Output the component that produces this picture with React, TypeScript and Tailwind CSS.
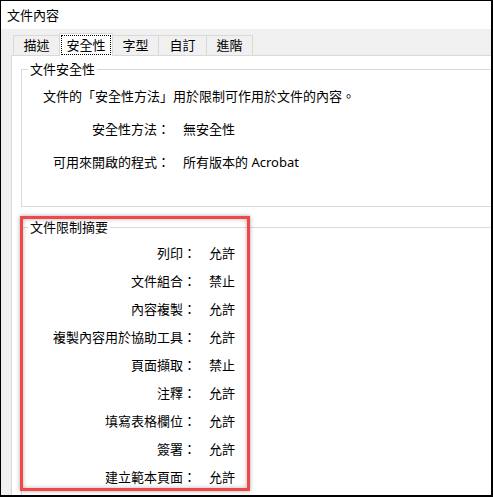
const tabs = [
  { label: "描述", w: "w-[46px]" },
  { label: "安全性", w: "w-[54px]", active: true },
  { label: "字型", w: "w-[45px]" },
  { label: "自訂", w: "w-[48px]" },
  { label: "進階", w: "w-[47px]" },
];

const security = [
  { label: "安全性方法：", value: "無安全性" },
  { label: "可用來開啟的程式：", value: "所有版本的 Acrobat" },
];

const restrictions = [
  { label: "列印：", value: "允許" },
  { label: "文件組合：", value: "禁止" },
  { label: "內容複製：", value: "允許" },
  { label: "複製內容用於協助工具：", value: "允許" },
  { label: "頁面擷取：", value: "禁止" },
  { label: "注釋：", value: "允許" },
  { label: "填寫表格欄位：", value: "允許" },
  { label: "簽署：", value: "允許" },
  { label: "建立範本頁面：", value: "允許" },
];

function Tab({ label, w, active, idx }: { label: string; w: string; active?: boolean; idx: number }) {
  if (active) {
    return (
      <div
        className={`${w} h-[23px] -mb-px relative z-10 bg-white border-t border-l border-r border-[#d9d9d9] flex items-start justify-center pt-[1px]`}
      >
        <span className="w-[50px] h-[20px] border border-dotted border-black flex items-center justify-center">
          {label}
        </span>
      </div>
    );
  }
  return (
    <div
      className={`${w} h-[20px] bg-[#f0f0f0] border-t border-[#d9d9d9] flex items-center justify-center ${
        idx === 2 ? "" : "border-l"
      } ${idx === tabs.length - 1 ? "border-r" : ""}`}
    >
      {label}
    </div>
  );
}

export default function App() {
  return (
    <div
      className="relative w-[493px] h-[497px] overflow-hidden bg-white border-t border-l border-r-2 border-b-2 border-black flex flex-col text-[13px] leading-none text-black"
      style={{ fontFamily: '"Noto Sans", "Noto Sans CJK TC", sans-serif' }}
    >
      <div className="h-[28px] shrink-0 flex items-center pl-[6px]">文件內容</div>

      <div className="flex-1 flex flex-col bg-[#f0f0f0] pl-[10px]">
        <div className="h-[26px] shrink-0 flex items-end ml-[2px]">
          {tabs.map((t, i) => (
            <Tab key={t.label} label={t.label} w={t.w} active={t.active} idx={i} />
          ))}
        </div>

        <div className="flex-1 flex flex-col bg-white border-t border-l border-[#d9d9d9] pl-[9px]">
          <div className="relative mt-[13px] h-[138px] shrink-0 border-t border-l border-b border-[#d9d9d9]">
            <div className="absolute left-[6px] top-[-11px] h-[20px] px-[2px] bg-white flex items-center">
              文件安全性
            </div>
            <div className="mt-[16px] h-[20px] pl-[21px] flex items-center">
              文件的「安全性方法」用於限制可作用於文件的內容。
            </div>
            <div className="mt-[13px] grid grid-cols-[148px_auto] gap-x-[13px] gap-y-[13px]">
              {security.map((r) => (
                <div key={r.label} className="contents">
                  <div className="h-[20px] flex items-center justify-end">{r.label}</div>
                  <div className="h-[20px] flex items-center">{r.value}</div>
                </div>
              ))}
            </div>
          </div>

          <div className="relative mt-[20px] flex-1 border-t border-l border-[#d9d9d9] pt-[11px]">
            <div className="absolute left-[6px] top-[-11px] h-[20px] px-[2px] bg-white flex items-center">
              文件限制摘要
            </div>
            <div className="grid grid-cols-[174px_auto] gap-x-[13px]">
              {restrictions.map((r) => (
                <div key={r.label} className="contents">
                  <div className="h-[28px] flex items-center justify-end">{r.label}</div>
                  <div className="h-[28px] flex items-center">{r.value}</div>
                </div>
              ))}
            </div>
          </div>
        </div>
      </div>

      <div className="absolute left-[19px] top-[215px] w-[230px] h-[275px] border-[3px] border-[#f04848] shadow-[0_0_4px_rgba(0,0,0,0.35),inset_0_0_4px_rgba(0,0,0,0.3)] pointer-events-none" />
    </div>
  );
}
